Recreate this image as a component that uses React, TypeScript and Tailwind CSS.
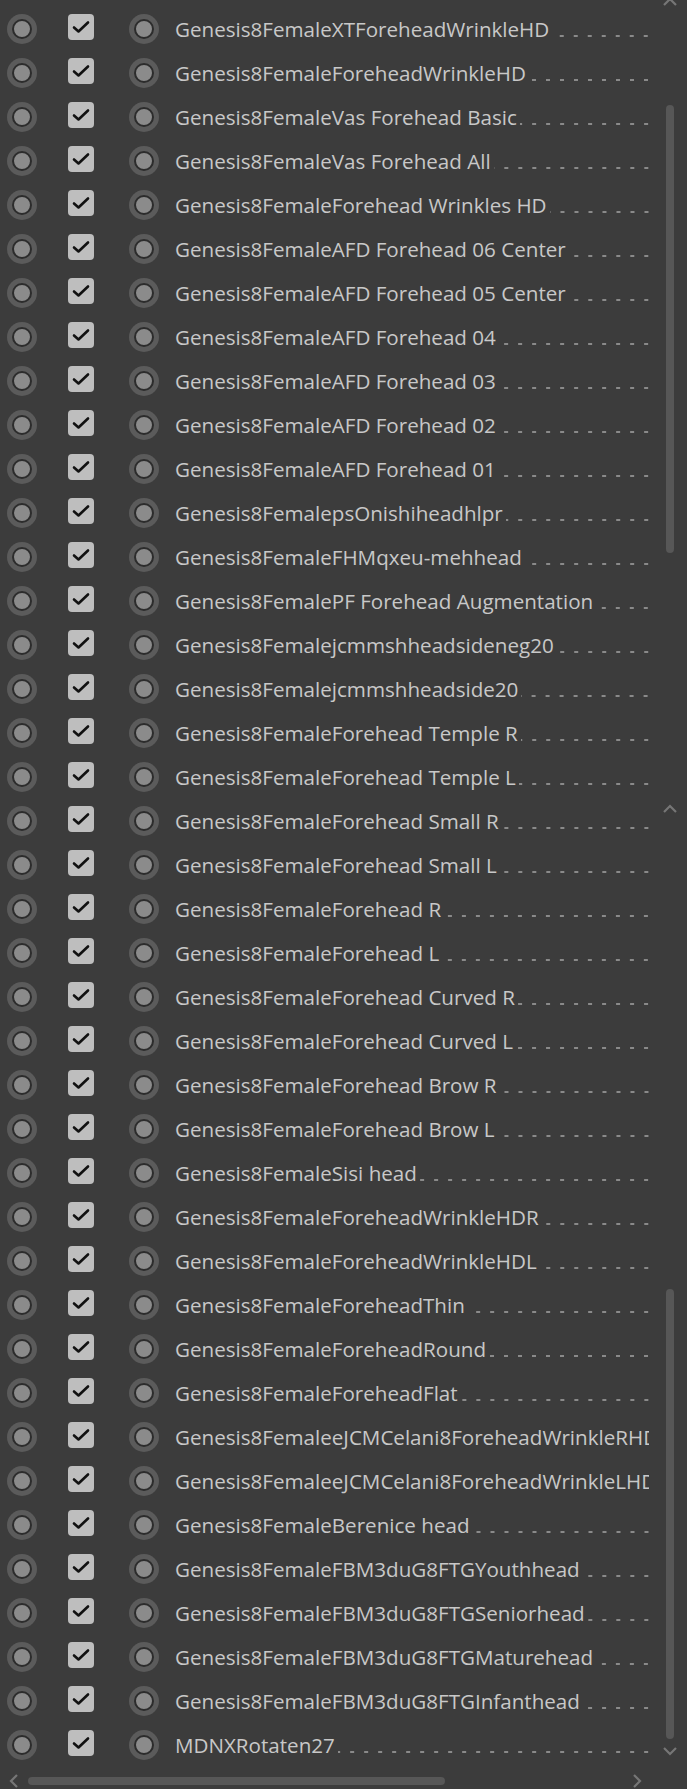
import React from "react";

const names = [
  "Genesis8FemaleXTForeheadWrinkleHD",
  "Genesis8FemaleForeheadWrinkleHD",
  "Genesis8FemaleVas Forehead Basic",
  "Genesis8FemaleVas Forehead All",
  "Genesis8FemaleForehead Wrinkles HD",
  "Genesis8FemaleAFD Forehead 06 Center",
  "Genesis8FemaleAFD Forehead 05 Center",
  "Genesis8FemaleAFD Forehead 04",
  "Genesis8FemaleAFD Forehead 03",
  "Genesis8FemaleAFD Forehead 02",
  "Genesis8FemaleAFD Forehead 01",
  "Genesis8FemalepsOnishiheadhlpr",
  "Genesis8FemaleFHMqxeu-mehhead",
  "Genesis8FemalePF Forehead Augmentation",
  "Genesis8Femalejcmmshheadsideneg20",
  "Genesis8Femalejcmmshheadside20",
  "Genesis8FemaleForehead Temple R",
  "Genesis8FemaleForehead Temple L",
  "Genesis8FemaleForehead Small R",
  "Genesis8FemaleForehead Small L",
  "Genesis8FemaleForehead R",
  "Genesis8FemaleForehead L",
  "Genesis8FemaleForehead Curved R",
  "Genesis8FemaleForehead Curved L",
  "Genesis8FemaleForehead Brow R",
  "Genesis8FemaleForehead Brow L",
  "Genesis8FemaleSisi head",
  "Genesis8FemaleForeheadWrinkleHDR",
  "Genesis8FemaleForeheadWrinkleHDL",
  "Genesis8FemaleForeheadThin",
  "Genesis8FemaleForeheadRound",
  "Genesis8FemaleForeheadFlat",
  "Genesis8FemaleeJCMCelani8ForeheadWrinkleRHD",
  "Genesis8FemaleeJCMCelani8ForeheadWrinkleLHD",
  "Genesis8FemaleBerenice head",
  "Genesis8FemaleFBM3duG8FTGYouthhead",
  "Genesis8FemaleFBM3duG8FTGSeniorhead",
  "Genesis8FemaleFBM3duG8FTGMaturehead",
  "Genesis8FemaleFBM3duG8FTGInfanthead",
  "MDNXRotaten27",
];

function Radio() {
  return (
    <div className="w-[30px] h-[30px] rounded-full bg-[#5b5b5b] flex items-center justify-center shrink-0">
      <div className="w-[20px] h-[20px] rounded-full border-2 border-[#2c2c2c] bg-[#8b8b8b]" />
    </div>
  );
}

function Check() {
  return (
    <div className="w-[26px] h-[26px] rounded-[4px] bg-[#bebebe] flex items-center justify-center shrink-0 -mt-[4px]">
      <svg width="18" height="14" viewBox="0 0 18 14">
        <path d="M2 7.5 L6.5 11.5 L16 2.5" fill="none" stroke="#111" strokeWidth="2.6" strokeLinecap="round" strokeLinejoin="round" />
      </svg>
    </div>
  );
}

function Chevron({ dir }: { dir: "up" | "down" | "left" | "right" }) {
  const d = {
    up: "M2 9 L8 3 L14 9",
    down: "M2 3 L8 9 L14 3",
    left: "M9 2 L3 8 L9 14",
    right: "M3 2 L9 8 L3 14",
  }[dir];
  const vertical = dir === "up" || dir === "down";
  return (
    <svg width={vertical ? 16 : 12} height={vertical ? 12 : 16} viewBox={vertical ? "0 0 16 12" : "0 0 12 16"}>
      <path d={d} fill="none" stroke="#767676" strokeWidth="2.2" />
    </svg>
  );
}

function Row({ name }: { name: string }) {
  return (
    <div className="flex items-center h-[44px]">
      <div className="ml-[7px]">
        <Radio />
      </div>
      <div className="ml-[31px]">
        <Check />
      </div>
      <div className="ml-[35px]">
        <Radio />
      </div>
      <div className="ml-[16px] w-[474px] h-full flex items-center overflow-hidden">
        <span className="whitespace-nowrap text-[20.6px] text-[#c8c8c8] pr-[3px] shrink-0 font-['Open_Sans',sans-serif]">
          {name}
        </span>
        <span className="flex-1 self-stretch bg-[linear-gradient(to_right,transparent_10px,#8a8a8a_10px)] bg-size-[14px_2px] bg-repeat-x bg-position-[right_1px_top_28px]" />
      </div>
    </div>
  );
}

export default function App() {
  return (
    <div className="w-[687px] h-[1789px] bg-[#3c3c3c] flex flex-col overflow-hidden select-none">
      <div className="flex">
        <div className="w-[655px] pt-[7px]">
          {names.map((n) => (
            <Row key={n} name={n} />
          ))}
        </div>
        {/* vertical scrollbar (two stacked panels) */}
        <div className="flex-1 flex flex-col items-center pr-[3px]">
          <div className="-mt-[4px]">
            <Chevron dir="up" />
          </div>
          <div className="w-[8px] h-[448px] mt-[97px] rounded-full bg-[#575757]" />
          <div className="mt-[250px]">
            <Chevron dir="up" />
          </div>
          <div className="w-[8px] h-[450px] mt-[474px] rounded-full bg-[#575757]" />
          <div className="mt-[6px]">
            <Chevron dir="down" />
          </div>
        </div>
      </div>
      {/* horizontal scrollbar */}
      <div className="flex-1 flex items-center pt-[6px]">
        <div className="ml-[8px]">
          <Chevron dir="left" />
        </div>
        <div className="ml-[8px] w-[417px] h-[8px] rounded-full bg-[#575757]" />
        <div className="ml-[186px]">
          <Chevron dir="right" />
        </div>
      </div>
    </div>
  );
}
